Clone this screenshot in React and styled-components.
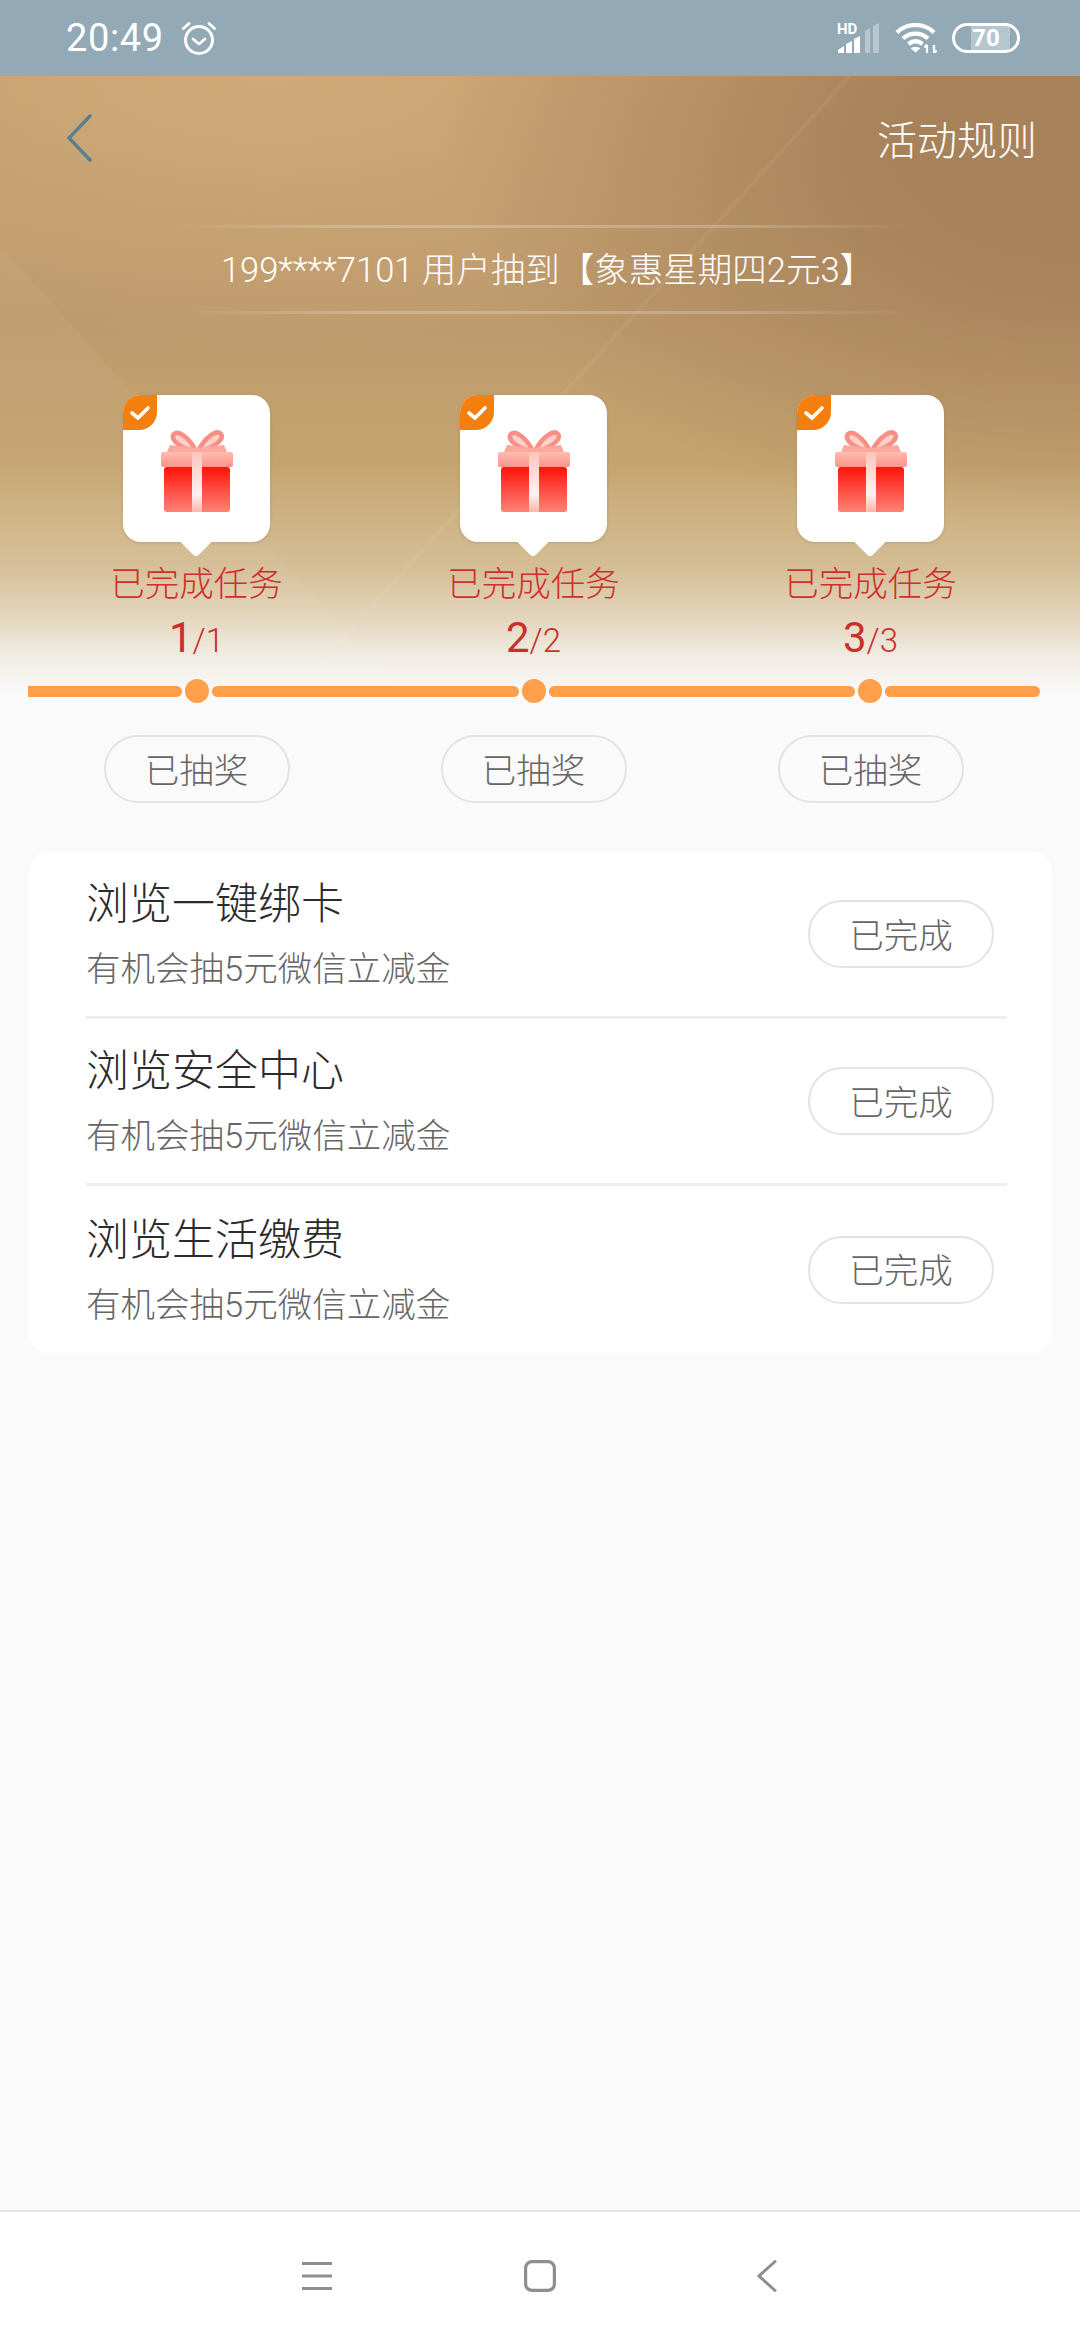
import React from 'react'
import styled, { createGlobalStyle } from 'styled-components'

const GlobalStyle = createGlobalStyle`
html, body {
    margin: 0;
    padding: 0;
    background: #fafafa;
}
* {
    box-sizing: border-box;
}
`

const Page = styled.div`
width: 1080px;
height: 2340px;
display: flex;
flex-direction: column;
background: #fafafa;
font-family: Roboto, "Noto Sans CJK SC", sans-serif;
overflow: hidden;
`

const StatusBar = styled.div`
height: 76px;
flex: none;
display: flex;
align-items: center;
justify-content: space-between;
padding: 0 60px 0 66px;
background: #93aab6;
color: #fff;
`

const StatusGroup = styled.div`
display: flex;
align-items: center;
gap: ${(p) => p.$gap}px;
`

const Time = styled.span`
font-size: 38px;
line-height: 76px;
letter-spacing: 0.6px;
`

const SignalBox = styled.div`
position: relative;
width: 44px;
height: 30px;
`

const HdLabel = styled.span`
position: absolute;
left: 0;
top: -1px;
font-size: 15px;
line-height: 15px;
font-weight: 700;
`

const Battery = styled.div`
width: 68px;
height: 30px;
border: 3px solid #fff;
border-radius: 15px;
display: flex;
align-items: center;
justify-content: center;
font-size: 24px;
line-height: 24px;
font-weight: 700;
background: linear-gradient(90deg, transparent 26%, #b5c6ce 26%, #b5c6ce 88%, transparent 88%);
`

const Hero = styled.div`
height: 624px;
flex: none;
background:
    linear-gradient(180deg, rgba(250,250,250,0) 62%, rgba(250,250,250,0.27) 79%, rgba(250,250,250,0.55) 87%, rgba(250,250,250,0.82) 93%, #fafafa 99%),
    linear-gradient(132deg, transparent 51.5%, rgba(255,225,190,0.08) 51.7%, transparent 52%),
    linear-gradient(48deg, rgba(255,255,255,0.03) 24.8%, transparent 25%),
    radial-gradient(ellipse 640px 400px at 100% 10%, rgba(163,125,86,0.85) 28%, rgba(163,125,86,0) 100%),
    radial-gradient(ellipse 620px 280px at 25% 0%, rgba(216,176,128,0.6), rgba(216,176,128,0) 100%),
    linear-gradient(180deg, #c2a06f 0%, #bd9a6c 38%, #c6a670 68%, #c9ab74 100%);
`

const TopBar = styled.div`
height: 124px;
display: flex;
align-items: center;
justify-content: space-between;
padding: 0 43px 0 67px;
`

const RulesLink = styled.span`
color: #fff;
font-size: 40px;
font-weight: 300;
`

const Marquee = styled.div`
margin-top: 25px;
height: 89px;
display: flex;
flex-direction: column;
align-items: center;
justify-content: space-between;
`

const FadeLine = styled.div`
width: 744px;
height: 3px;
background: linear-gradient(90deg, rgba(255,255,255,0), rgba(255,255,255,0.22) 25%, rgba(255,255,255,0.22) 75%, rgba(255,255,255,0));
`

const MarqueeText = styled.div`
color: #fff;
font-size: 34.5px;
font-weight: 300;
line-height: 40px;
padding-left: 15px;
white-space: nowrap;
`

const Columns = styled.div`
display: grid;
grid-template-columns: repeat(3, 337px);
margin-left: 28px;
`

const TaskList = styled(Columns)`
margin-top: 81px;
`

const Task = styled.div`
display: flex;
flex-direction: column;
align-items: center;
`

const GiftCard = styled.div`
position: relative;
width: 147px;
height: 147px;
background: #fff;
border-radius: 18px;
box-shadow: 0 1px 3px rgba(120,90,50,0.25);
display: flex;
justify-content: center;
padding-top: 35px;
&::after {
    content: '';
    position: absolute;
    left: 62px;
    bottom: -11px;
    width: 22px;
    height: 22px;
    background: #fff;
    transform: rotate(45deg);
    border-radius: 0 0 4px 0;
}
`

const DoneBadge = styled.div`
position: absolute;
left: 0;
top: 0;
width: 34px;
height: 35px;
background: #f57f0c;
border-radius: 18px 0 18px 0;
display: flex;
align-items: center;
justify-content: center;
`

const TaskLabel = styled.div`
margin-top: 22px;
color: #cf2f2a;
font-size: 34.5px;
font-weight: 300;
line-height: 40px;
`

const TaskCount = styled.div`
margin-top: 9px;
color: #c9302c;
font-size: 33px;
font-weight: 300;
line-height: 50px;
b {
    font-size: 42px;
    font-weight: 400;
}
`

const Track = styled.div`
margin: 13px 40px 0 28px;
height: 24px;
display: flex;
align-items: center;
gap: 3px;
`

const TrackSegment = styled.div`
height: 11px;
background: #ff9f4a;
flex: ${(p) => (p.$width ? `0 0 ${p.$width}px` : '1')};
border-radius: ${(p) => (p.$first ? '0 6px 6px 0' : '6px')};
`

const TrackDot = styled.div`
width: 24px;
height: 24px;
flex: none;
border-radius: 50%;
background: #ff9f4a;
`

const DrawList = styled(Columns)`
margin-top: 35px;
`

const PillButton = styled.div`
width: 186px;
height: 68px;
border: 2.5px solid #e3e3e3;
border-radius: 34px;
display: flex;
align-items: center;
justify-content: center;
color: #666;
font-size: 34.5px;
font-weight: 300;
padding-bottom: 3px;
`

const DrawCell = styled.div`
display: flex;
justify-content: center;
`

const TaskCardList = styled.div`
margin: 49px 28px 0 29px;
height: 501px;
background: #fff;
border-radius: 20px;
padding: 0 45px 0 57px;
`

const TaskRow = styled.div`
height: 167px;
display: flex;
align-items: center;
justify-content: space-between;
padding-right: 13px;
border-bottom: ${(p) => (p.$last ? 'none' : '3px solid #eeeeee')};
`

const TaskText = styled.div`
display: flex;
flex-direction: column;
padding-top: 5px;
`

const TaskTitle = styled.div`
color: #2b2b2b;
font-size: 43px;
font-weight: 300;
line-height: 48px;
`

const TaskSub = styled.div`
margin-top: 17px;
color: #666;
font-size: 34.5px;
font-weight: 300;
line-height: 48px;
`

const Spacer = styled.div`
flex: 1;
`

const NavBar = styled.div`
height: 130px;
flex: none;
background: #fff;
border-top: 2px solid #e6e6e6;
display: grid;
grid-template-columns: repeat(3, 32px);
column-gap: 191px;
padding-left: 301px;
align-items: center;
`

const AlarmIcon = () => (
  <svg width="36" height="36" viewBox="0 0 36 36" fill="none" stroke="#fff" strokeLinecap="round" strokeLinejoin="round">
    <circle cx="18" cy="20" r="13.5" strokeWidth="3" />
    <path d="M12 19l6 5 6-5" strokeWidth="2.6" />
    <path d="M2.5 8.5L8 3.5M33.5 8.5L28 3.5" strokeWidth="3" />
  </svg>
)

const SignalBars = () => (
  <svg width="44" height="30" viewBox="0 0 44 30">
    <path d="M1 30v-3l6-4v7zM9 30v-9l6-3v12zM17 30V16l6-3v17z" fill="#fff" />
    <path d="M28 30V8l5-3v25zM36 30V3l6-3v30z" fill="#fff" opacity="0.35" />
  </svg>
)

const WifiIcon = () => (
  <svg width="43" height="30" viewBox="0 0 43 30" fill="none" stroke="#fff" strokeWidth="4.2">
    <path d="M2 9.5C12-.5 29-.5 39 9.5" />
    <path d="M8 15.5c7.5-6.5 17.5-6.5 25 0" />
    <path d="M13.5 21c4.5-3.5 9.5-3.5 14 0" />
    <path d="M20.5 29.5l-5-4.5c2.5-1.5 7.5-1.5 10 0z" fill="#fff" stroke="none" />
    <path d="M32 30v-8M29.5 24.5l2.5-3M39 22v8M41.5 27.5l-2.5 3" strokeWidth="2.2" />
  </svg>
)

const BackIcon = () => (
  <svg width="26" height="48" viewBox="0 0 26 48" fill="none" stroke="#587f8f" strokeWidth="3.4" strokeLinecap="round">
    <path d="M23 2L2 24l21 22" />
  </svg>
)

const CheckIcon = () => (
  <svg width="22" height="18" viewBox="0 0 22 18" fill="none" stroke="#fff" strokeWidth="3.6" strokeLinecap="round" strokeLinejoin="round">
    <path d="M3 9l6 5L19 4" />
  </svg>
)

const GiftIcon = ({ id }) => (
  <svg width="72" height="82" viewBox="0 0 72 82">
    <defs>
      <linearGradient id={`lid${id}`} x1="0" y1="0" x2="0" y2="1">
        <stop offset="0" stopColor="#ffbcb0" />
        <stop offset="1" stopColor="#ff948a" />
      </linearGradient>
      <linearGradient id={`body${id}`} x1="0" y1="0" x2="0" y2="1">
        <stop offset="0" stopColor="#ff1208" />
        <stop offset="0.5" stopColor="#ff4c44" />
        <stop offset="1" stopColor="#ff8074" />
      </linearGradient>
      <linearGradient id={`rib${id}`} x1="0" y1="0" x2="0" y2="1">
        <stop offset="0" stopColor="#ffc4bc" />
        <stop offset="0.7" stopColor="#fff2f0" />
        <stop offset="1" stopColor="#ffb5ab" />
      </linearGradient>
    </defs>
    <path d="M35 21C28 7 17 0 13 4c-5 6 8 15 22 17zM37 21C44 7 56-1 60 4c4 6-9 15-23 17z" fill="#ffd0c9" stroke="#f98f84" strokeWidth="4.5" />
    <path d="M35 18L9 15l-3 7h60l-3-7z" fill="#fba99f" />
    <rect x="3" y="37" width="66" height="45" rx="3" fill={`url(#body${id})`} />
    <rect x="0" y="22" width="72" height="15" rx="2" fill={`url(#lid${id})`} />
    <rect x="31" y="22" width="10" height="60" fill={`url(#rib${id})`} />
  </svg>
)

const MenuIcon = () => (
  <svg width="32" height="32" viewBox="0 0 32 32" stroke="#8e8e8e" strokeWidth="3">
    <path d="M1 3.5h30M1 16h30M1 28.5h30" />
  </svg>
)

const HomeIcon = () => (
  <svg width="32" height="32" viewBox="0 0 32 32" fill="none" stroke="#8e8e8e" strokeWidth="3.2">
    <rect x="1.6" y="1.6" width="28.8" height="28.8" rx="6.5" />
  </svg>
)

const NavBackIcon = () => (
  <svg width="32" height="32" viewBox="0 0 32 32" fill="none" stroke="#8e8e8e" strokeWidth="3" strokeLinecap="round">
    <path d="M28 1.5L12 16l16 14.5" />
  </svg>
)

const progress = [1, 2, 3]

const tasks = ['浏览一键绑卡', '浏览安全中心', '浏览生活缴费']

const App = () => {
  return (
    <Page>
      <GlobalStyle />
      <StatusBar>
        <StatusGroup $gap={17}>
          <Time>20:49</Time>
          <AlarmIcon />
        </StatusGroup>
        <StatusGroup $gap={14}>
          <SignalBox>
            <HdLabel>HD</HdLabel>
            <SignalBars />
          </SignalBox>
          <WifiIcon />
          <Battery>70</Battery>
        </StatusGroup>
      </StatusBar>
      <Hero>
        <TopBar>
          <BackIcon />
          <RulesLink>活动规则</RulesLink>
        </TopBar>
        <Marquee>
          <FadeLine />
          <MarqueeText>199****7101 用户抽到【象惠星期四2元3】</MarqueeText>
          <FadeLine />
        </Marquee>
        <TaskList>
          {progress.map((n) => (
            <Task key={n}>
              <GiftCard>
                <DoneBadge>
                  <CheckIcon />
                </DoneBadge>
                <GiftIcon id={n} />
              </GiftCard>
              <TaskLabel>已完成任务</TaskLabel>
              <TaskCount>
                <b>{n}</b>/{n}
              </TaskCount>
            </Task>
          ))}
        </TaskList>
        <Track>
          <TrackSegment $width={154} $first />
          <TrackDot />
          <TrackSegment />
          <TrackDot />
          <TrackSegment />
          <TrackDot />
          <TrackSegment $width={155} />
        </Track>
      </Hero>
      <DrawList>
        {progress.map((n) => (
          <DrawCell key={n}>
            <PillButton>已抽奖</PillButton>
          </DrawCell>
        ))}
      </DrawList>
      <TaskCardList>
        {tasks.map((title, i) => (
          <TaskRow key={title} $last={i === tasks.length - 1}>
            <TaskText>
              <TaskTitle>{title}</TaskTitle>
              <TaskSub>有机会抽5元微信立减金</TaskSub>
            </TaskText>
            <PillButton>已完成</PillButton>
          </TaskRow>
        ))}
      </TaskCardList>
      <Spacer />
      <NavBar>
        <MenuIcon />
        <HomeIcon />
        <NavBackIcon />
      </NavBar>
    </Page>
  )
}

export default App
